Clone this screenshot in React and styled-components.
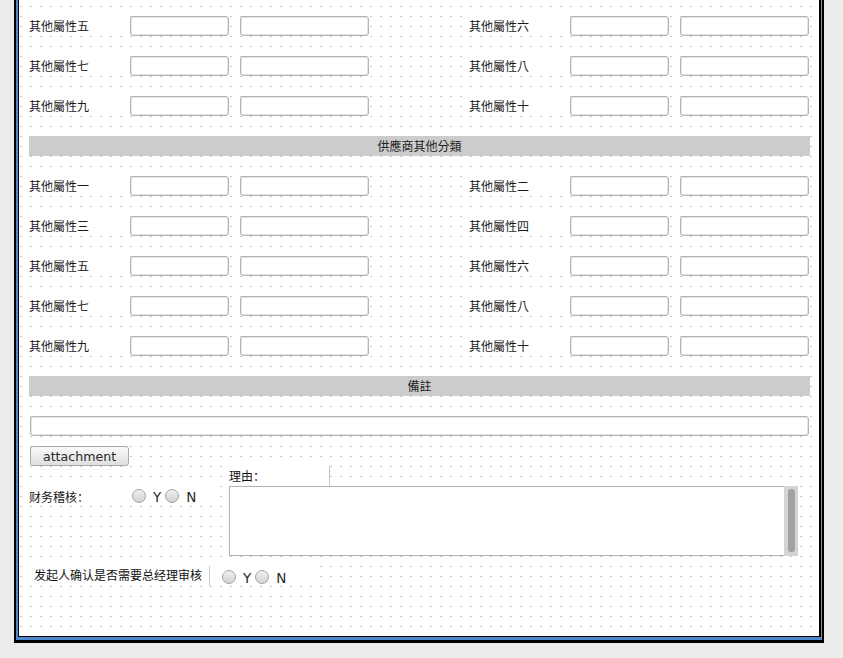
import styled, { createGlobalStyle } from 'styled-components';

const GlobalStyle = createGlobalStyle`
  body {
    margin: 0;
    background: #ececec;
    font-family: "Noto Sans CJK TC", "Noto Sans CJK SC", sans-serif;
  }
`;

const upperRows = [['五', '六'], ['七', '八'], ['九', '十']];
const lowerRows = [['一', '二'], ['三', '四'], ['五', '六'], ['七', '八'], ['九', '十']];

const App = () => (
  <Page>
    <GlobalStyle />
    <Frame>
      <FrameBlue>
        <FrameInner>
          <Canvas>
            {upperRows.map(([a, b], i) => (
              <AttrRow key={'u' + i} left={a} right={b} />
            ))}
            <SectionBar>供應商其他分類</SectionBar>
            {lowerRows.map(([a, b], i) => (
              <AttrRow key={'l' + i} left={a} right={b} />
            ))}
            <SectionBar>備註</SectionBar>
            <WideField />
            <AttachButton>attachment</AttachButton>

            <ReviewArea>
              <ReviewLeft>
                <FinanceRow>
                  <FinanceLabel>财务稽核：</FinanceLabel>
                  <YesNo />
                </FinanceRow>
              </ReviewLeft>
              <ReviewRight>
                <ReasonLabel>理由：</ReasonLabel>
                <MemoBox>
                  <MemoField />
                  <MemoTrack>
                    <MemoThumb />
                  </MemoTrack>
                </MemoBox>
              </ReviewRight>
            </ReviewArea>

            <ConfirmRow>
              <ConfirmLabel>发起人确认是否需要总经理审核</ConfirmLabel>
              <ConfirmRadios>
                <YesNo />
              </ConfirmRadios>
            </ConfirmRow>
          </Canvas>
        </FrameInner>
      </FrameBlue>
    </Frame>
  </Page>
);

export default App;

const AttrRow = ({ left, right }) => (
  <RowGrid>
    <FieldLabel>其他屬性{left}</FieldLabel>
    <TextField />
    <span />
    <TextField />
    <span />
    <FieldLabel>其他屬性{right}</FieldLabel>
    <TextField />
    <span />
    <TextField />
  </RowGrid>
);

const YesNo = () => (
  <RadioGroup>
    <RadioOption>
      <RadioDot />
      <RadioText>Y</RadioText>
    </RadioOption>
    <RadioOption>
      <RadioDot />
      <RadioText>N</RadioText>
    </RadioOption>
  </RadioGroup>
);

const Page = styled.div`
  height: 658px;
  overflow: hidden;
`;

const Frame = styled.div`
  margin-left: 14px;
  width: 810px;
  box-sizing: border-box;
  border-left: 2px solid #000;
  border-right: 2px solid #000;
  border-bottom: 3px solid #000;
`;

const FrameBlue = styled.div`
  border-left: 2px solid #4f86c9;
  border-right: 1px solid #8a8a8a;
  border-bottom: 3px solid #4f86c9;
`;

const FrameInner = styled.div`
  border-left: 1px solid #000;
  border-right: 2px solid #000;
  border-bottom: 1px solid #000;
`;

const Canvas = styled.div`
  width: 800px;
  height: 636px;
  box-sizing: border-box;
  padding: 16px 9px 0 10px;
  background-color: #fff;
  background-image: conic-gradient(from 270deg at 2px 1px, #c6c6c6 25%, transparent 0);
  background-size: 10px 10px;
  background-position: 1px 6px;
`;

const RowGrid = styled.div`
  display: grid;
  grid-template-columns: 101px 99px 11px 129px 100px 101px 99px 11px 129px;
  height: 20px;
  margin-bottom: 20px;
`;

const FieldLabel = styled.div`
  background: #fff;
  font-size: 12px;
  line-height: 20px;
  color: #1a1a1a;
  white-space: nowrap;
`;

const TextField = styled.input`
  box-sizing: border-box;
  width: 100%;
  height: 20px;
  margin: 0;
  padding: 0 4px;
  background: #fff;
  border: 1px solid #b4b4b4;
  border-radius: 3px;
  box-shadow: inset 0 0 0 1px #e4e4e4;
  outline: 0;
`;

const SectionBar = styled.div`
  width: 781px;
  height: 20px;
  margin-bottom: 20px;
  background: #cccccc;
  text-align: center;
  font-size: 12px;
  line-height: 20px;
  color: #222;
`;

const WideField = styled(TextField)`
  display: block;
  width: 779px;
  margin: 0 0 10px 1px;
`;

const AttachButton = styled.button`
  display: block;
  box-sizing: border-box;
  width: 99px;
  height: 20px;
  margin: 0 0 0 1px;
  padding: 1px 0 0;
  border: 1px solid #a9a9a9;
  border-radius: 3px;
  background: linear-gradient(#fbfbfb, #dedede);
  font-family: "DejaVu Sans", sans-serif;
  font-size: 12.6px;
  line-height: 17px;
  color: #2a2a2a;
`;

const ReviewArea = styled.div`
  display: flex;
`;

const ReviewLeft = styled.div`
  width: 190px;
  padding-top: 20px;
`;

const FinanceRow = styled.div`
  display: flex;
  align-items: center;
  height: 20px;
  background: #fff;
`;

const FinanceLabel = styled.div`
  width: 103px;
  font-family: "Noto Sans CJK SC", sans-serif;
  font-size: 12px;
  color: #1a1a1a;
`;

const ReviewRight = styled.div`
  margin-left: 10px;
`;

const ReasonLabel = styled.div`
  box-sizing: border-box;
  width: 101px;
  height: 20px;
  background: #fff;
  border-right: 1px solid #c4c4c4;
  font-family: "Noto Sans CJK SC", sans-serif;
  font-size: 12px;
  line-height: 20px;
  color: #111;
`;

const MemoBox = styled.div`
  display: flex;
  width: 569px;
  height: 70px;
`;

const MemoField = styled.div`
  flex: 1;
  background: #fff;
  border: 1px solid #b2b2b2;
  border-right: 0;
`;

const MemoTrack = styled.div`
  display: flex;
  width: 14px;
  box-sizing: border-box;
  padding: 3px 3px 4px 4px;
  background: #d4d4d4;
`;

const MemoThumb = styled.div`
  flex: 1;
  background: #a2a2a2;
  border-radius: 3px;
`;

const ConfirmRow = styled.div`
  display: flex;
  align-items: stretch;
  height: 20px;
  margin-top: 10px;
`;

const ConfirmLabel = styled.div`
  box-sizing: border-box;
  width: 181px;
  padding-left: 5px;
  background: #fff;
  border-right: 1px solid #c8c8c8;
  font-family: "Noto Sans CJK SC", sans-serif;
  font-size: 12px;
  line-height: 18px;
  color: #111;
  white-space: nowrap;
`;

const ConfirmRadios = styled.div`
  display: flex;
  align-items: center;
  width: 98px;
  padding: 2px 0 0 12px;
  background: #fff;
`;

const RadioGroup = styled.div`
  display: flex;
  align-items: center;
  gap: 4px;
`;

const RadioOption = styled.label`
  display: flex;
  align-items: center;
  gap: 7px;
`;

const RadioDot = styled.span`
  box-sizing: border-box;
  width: 14px;
  height: 14px;
  border-radius: 50%;
  border: 1px solid #a3a3a3;
  background: linear-gradient(#f0f0f0, #d2d2d2);
`;

const RadioText = styled.span`
  font-family: "DejaVu Sans", sans-serif;
  font-size: 13.5px;
  line-height: 14px;
  padding-top: 2px;
  color: #2a2a2a;
`;
